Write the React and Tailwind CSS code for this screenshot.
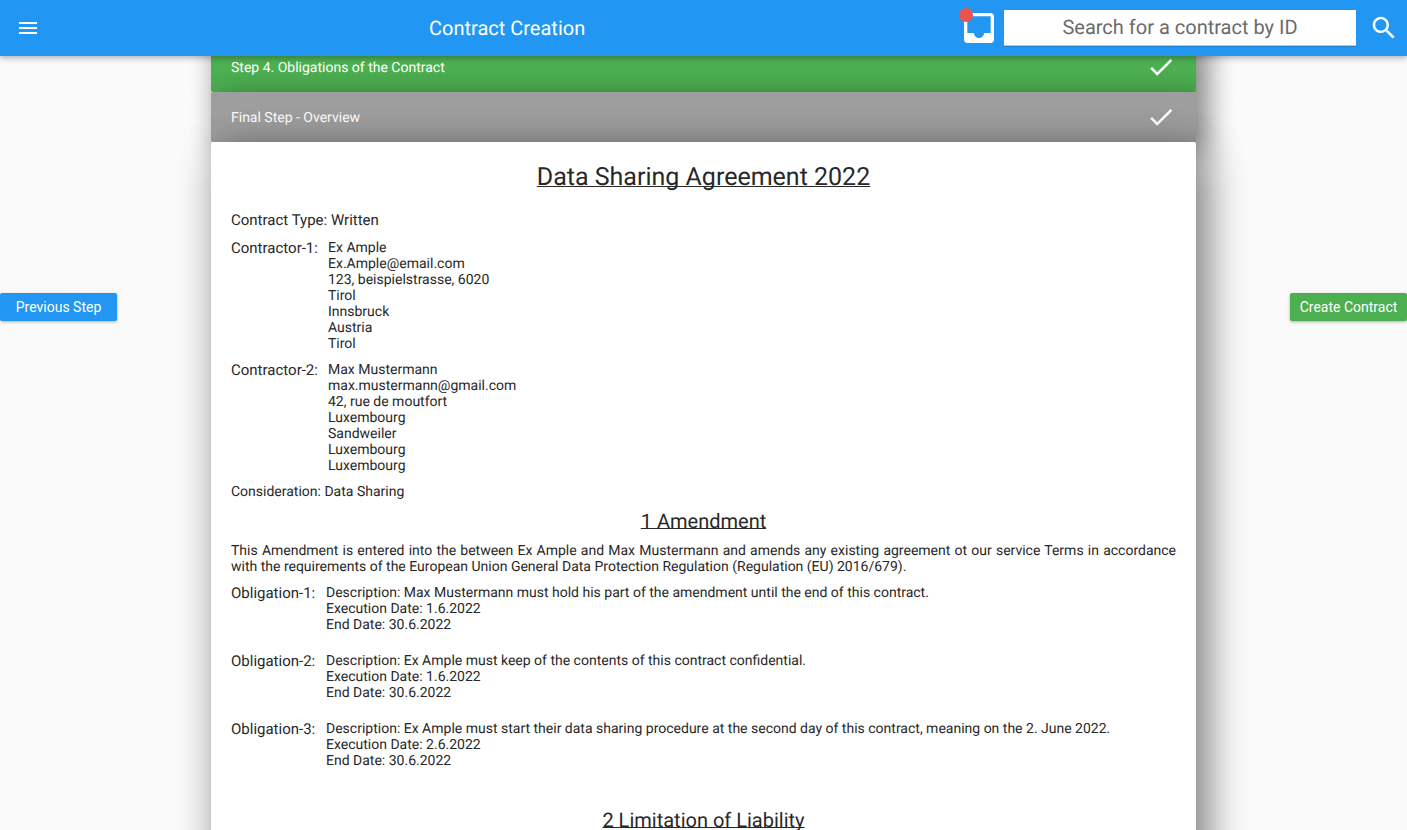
import React from "react";

const Check = () => (
  <svg className="mr-[20px] size-[30px] fill-white" viewBox="0 0 24 24">
    <path d="M9 16.17L4.83 12l-1.42 1.41L9 19 21 7l-1.41-1.41z" />
  </svg>
);

const panelShadow = "shadow-[9px_10px_30px_rgba(0,0,0,0.3),9px_10px_30px_rgba(0,0,0,0.3)]";
const heading = "underline decoration-1 [text-decoration-skip-ink:none]";

function StepBar({ title, color }) {
  return (
    <div className={`flex h-[50px] shrink-0 items-center justify-between rounded-[2px] pl-5 text-white ${color} ${panelShadow}`}>
      <span className="pt-0.5 text-[14px]">{title}</span>
      <Check />
    </div>
  );
}

function Party({ label, lines }) {
  return (
    <div className="mb-[10px] flex">
      <div className="w-[97px] shrink-0 text-[15px] leading-[18px]">{label}</div>
      <div className="-mb-px pt-px text-[14px] leading-4">
        {lines.map((line, i) => (
          <div key={i}>{line}</div>
        ))}
      </div>
    </div>
  );
}

function Obligation({ label, lines }) {
  return (
    <div className="mb-5 flex">
      <div className="w-[95px] shrink-0 text-[15px] leading-[18px]">{label}</div>
      <div className="-mb-px pt-px text-[14px] leading-4">
        {lines.map((line) => (
          <div key={line}>{line}</div>
        ))}
      </div>
    </div>
  );
}

const contractors = [
  ["Contractor-1:", ["Ex Ample", "Ex.Ample@email.com", "123, beispielstrasse, 6020", "Tirol", "Innsbruck", "Austria", "Tirol"]],
  ["Contractor-2:", ["Max Mustermann", "max.mustermann@gmail.com", "42, rue de moutfort", "Luxembourg", "Sandweiler", "Luxembourg", "Luxembourg"]],
];

const obligations = [
  ["Obligation-1:", ["Description: Max Mustermann must hold his part of the amendment until the end of this contract.", "Execution Date: 1.6.2022", "End Date: 30.6.2022"]],
  ["Obligation-2:", ["Description: Ex Ample must keep of the contents of this contract confidential.", "Execution Date: 1.6.2022", "End Date: 30.6.2022"]],
  ["Obligation-3:", ["Description: Ex Ample must start their data sharing procedure at the second day of this contract, meaning on the 2. June 2022.", "Execution Date: 2.6.2022", "End Date: 30.6.2022"]],
];

export default function App() {
  return (
    <div className="flex h-[830px] w-[1407px] flex-col overflow-hidden bg-[#fafafa] font-['Roboto',sans-serif] text-[#282828] [text-rendering:geometricPrecision]">
      <header className="z-10 flex h-14 shrink-0 items-center bg-[#2196f3] text-white shadow-[0_2px_6px_rgba(0,0,0,0.3)]">
        <svg className="ml-4 size-6 fill-white" viewBox="0 0 24 24">
          <path d="M3 18h18v-2H3v2zm0-5h18v-2H3v2zm0-7v2h18V6H3z" />
        </svg>
        <h1 className="ml-[389px] w-[530px] text-[20px] leading-6">Contract Creation</h1>
        <div className="relative size-10">
          <svg className="size-10 fill-white" viewBox="0 0 24 24">
            <path d="M19 3H4.99c-1.11 0-1.98.89-1.98 2L3 19c0 1.1.88 2 1.99 2H19c1.1 0 2-.9 2-2V5c0-1.11-.9-2-2-2zm0 12h-4c0 1.66-1.35 3-3 3s-3-1.34-3-3H4.99V5H19v10z" />
          </svg>
          <span className="absolute left-0 top-0 size-[14px] rounded-full bg-[#ef5350]" />
        </div>
        <div className="ml-[5px] flex h-9 w-[352px] items-center justify-center border-b border-[#c9c9c9] bg-white pb-0.5 text-[20px] text-[#6b6b6b] shadow-[0_1px_0_#1e80cf]">
          Search for a contract by ID
        </div>
        <svg className="ml-[13px] size-[30px] fill-white" viewBox="0 0 24 24">
          <path d="M15.5 14h-.79l-.28-.27C15.41 12.59 16 11.11 16 9.5 16 5.91 13.09 3 9.5 3S3 5.91 3 9.5 5.91 16 9.5 16c1.61 0 3.09-.59 4.23-1.57l.27.28v.79l5 4.99L20.49 19l-4.99-5zm-6 0C7.01 14 5 11.99 5 9.5S7.01 5 9.5 5 14 7.01 14 9.5 11.99 14 9.5 14z" />
        </svg>
      </header>

      <div className="flex min-h-0 flex-1">
        <div className="w-[211px] shrink-0 pt-[237px]">
          <button className="flex h-7 w-[117px] items-center justify-center rounded-[2px] bg-[#2196f3] text-[14px] text-white shadow-[0_1px_3px_rgba(0,0,0,0.3)]">
            Previous Step
          </button>
        </div>

        <main className="-mt-[64px] flex w-[985px] shrink-0 flex-col">
          <StepBar title="Step 3. Terms of the Contract" color="bg-[#4caf50]" />
          <StepBar title="Step 4. Obligations of the Contract" color="bg-[#4caf50]" />
          <StepBar title="Final Step - Overview" color="bg-[#9e9e9e]" />
          <section className="h-[1400px] shrink-0 rounded-[2px] bg-white px-5 pt-5 shadow-[9px_10px_40px_rgba(0,0,0,0.3),9px_10px_40px_rgba(0,0,0,0.3)]">
            <h2 className={`-mb-px pt-px text-center text-[25px] leading-[29px] underline-offset-[0.5px] ${heading}`}>Data Sharing Agreement 2022</h2>
            <p className="mb-[10px] mt-5 text-[15px] leading-[18px]">Contract Type: Written</p>
            {contractors.map(([label, lines]) => (
              <Party key={label} label={label} lines={lines} />
            ))}
            <p className="-mb-px pt-px text-[14px] leading-4">Consideration: Data Sharing</p>
            <h3 className={`mt-[10px] text-center text-[20px] leading-6 underline-offset-[0px] ${heading}`}>1 Amendment</h3>
            <p className="mb-[9px] mt-[10px] text-justify text-[14px] leading-4">
              This Amendment is entered into the between Ex Ample and Max Mustermann and amends any existing agreement ot our service Terms in accordance with the requirements of the European Union General Data Protection Regulation (Regulation (EU) 2016/679).
            </p>
            {obligations.map(([label, lines]) => (
              <Obligation key={label} label={label} lines={lines} />
            ))}
            <h3 className={`mt-[40px] text-center text-[20px] leading-6 underline-offset-[0px] ${heading}`}>2 Limitation of Liability</h3>
          </section>
        </main>

        <div className="flex flex-1 justify-end pt-[237px]">
          <button className="flex h-7 w-[117px] items-center justify-center rounded-[2px] bg-[#4caf50] text-[14px] text-white shadow-[0_1px_3px_rgba(0,0,0,0.3)]">
            Create Contract
          </button>
        </div>
      </div>
    </div>
  );
}
